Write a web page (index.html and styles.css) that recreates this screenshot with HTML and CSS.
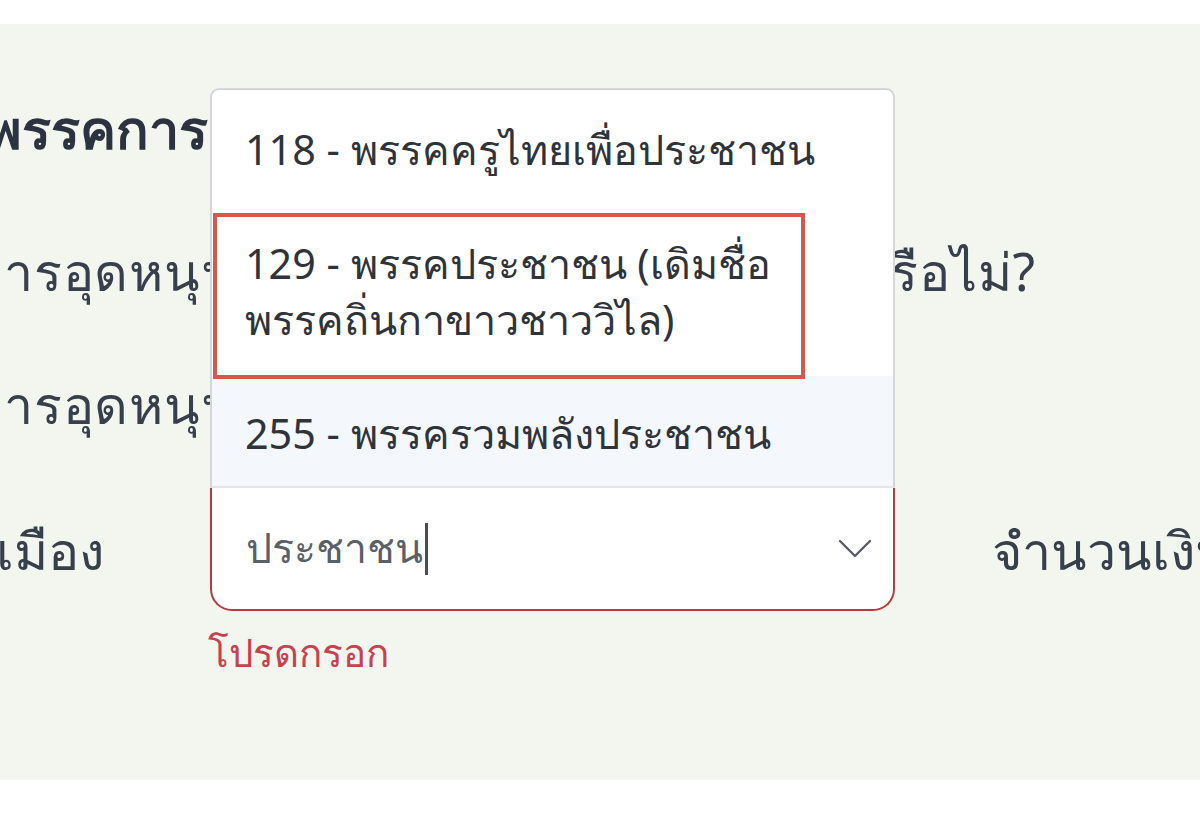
FILE: index.html
```html
<!DOCTYPE html>
<html lang="th">
<head>
  <meta charset="UTF-8" />
  <meta name="viewport" content="width=device-width, initial-scale=1" />
  <title>อุดหนุนพรรคการเมือง</title>
  <link rel="stylesheet" href="styles.css">
</head>
<body>
  <div class="panel">
    <div class="form">
      <h2 class="section-title">พรรคการเมือง</h2>

      <!-- choices -->
      <label class="choice">
        <span class="radio"></span>
        <span class="choice-text">การอุดหนุนให้พรรคการเมืองที่เลือกได้ หรือไม่?</span>
      </label>
      <label class="choice">
        <span class="radio"></span>
        <span class="choice-text">การอุดหนุนพรรคการเมือง</span>
      </label>

      <div class="field-row">
        <div class="field-label party-label">พรรคการเมือง</div>

        <div class="select-col">
          <div class="select-wrap">
            <ul class="dropdown">
              <li class="option">118 - พรรคครูไทยเพื่อประชาชน</li>
              <li class="option">129 - พรรคประชาชน (เดิมชื่อ<br>พรรคถิ่นกาขาวชาววิไล)</li>
              <li class="option option-hover">255 - พรรครวมพลังประชาชน</li>
              <div class="mark"></div>
            </ul>
            <div class="select">
              <span class="select-value">ประชาชน</span><span class="caret"></span>
              <svg class="chevron" width="34" height="20" viewBox="0 0 34 20">
                <polyline points="2,2 17,17 32,2" fill="none" stroke="#5a5d63" stroke-width="2.4" stroke-linecap="round" stroke-linejoin="round" />
              </svg>
            </div>
          </div>
          <div class="error">โปรดกรอก</div>
        </div>

        <div class="field-label amount">จำนวนเงินที่อุดหนุน</div>
      </div>
    </div>
  </div>
</body>
</html>
```

FILE: styles.css
```css
body {
  margin: 0;
  padding: 0;
  background: #fff;
  font-family: 'Noto Sans', 'DejaVu Sans', sans-serif;
  color: #373e4c;
  overflow: hidden;
}

.panel {
  margin-top: 24px;
  height: 756px;
  background: #f2f6ef;
  overflow: hidden;
}

.form {
  margin-left: -150px;
  padding-top: 73px;
}

.section-title {
  margin: 0 0 0 136px;
  font-size: 54px;
  line-height: 62px;
  font-weight: 700;
  color: #2c3340;
  white-space: nowrap;
}

.choice {
  display: flex;
  align-items: center;
  gap: 20px;
  margin-left: 74px;
  height: 133px;
  white-space: nowrap;
}

.choice:first-of-type {
  margin-top: 47px;
}

.radio {
  width: 24px;
  height: 24px;
  border: 2px solid #9aa0a8;
  border-radius: 50%;
  background: #fff;
  flex-shrink: 0;
}

.choice-text {
  font-size: 52px;
  letter-spacing: 0.85px;
}

.field-row {
  display: grid;
  grid-template-columns: 360px 685px 1fr;
  margin-top: 16px;
  white-space: nowrap;
}

.field-label {
  font-size: 52px;
  height: 123px;
  line-height: 123px;
}

.party-label {
  margin-left: -67px;
}

.amount {
  margin-left: 97px;
}

.select-col {
  position: relative;
}

.select-wrap {
  position: relative;
}

.dropdown {
  position: absolute;
  left: 0;
  right: 0;
  bottom: 100%;
  margin: 0;
  padding: 0;
  list-style: none;
  background: #fff;
  border: 2px solid #d4d6d9;
  border-bottom-color: #e3e5e9;
  border-radius: 9px 9px 0 0;
  z-index: 5;
}

.option {
  padding: 29px 33px;
  font-size: 41.3px;
  line-height: 56px;
  color: #2f343b;
}

.option:first-child {
  padding-top: 31px;
}

.option-hover {
  padding-bottom: 25px;
  background: #f4f7fb;
}

.mark {
  position: absolute;
  left: 1px;
  top: 123px;
  width: 592px;
  height: 166px;
  box-sizing: border-box;
  border: 4px solid #d8574a;
}

.select {
  display: flex;
  align-items: center;
  height: 123px;
  box-sizing: border-box;
  padding: 0 21px 0 34px;
  background: #fff;
  border: 2px solid #b83a3c;
  border-top: none;
  border-radius: 0 0 22px 22px;
}

.select-value {
  font-size: 41px;
  color: #5b5f66;
}

.caret {
  width: 3px;
  height: 52px;
  margin-left: 2px;
  background: #4a4d52;
}

.chevron {
  margin-left: auto;
}

.error {
  margin-top: 12px;
  margin-left: -2px;
  font-size: 38.5px;
  color: #c8414e;
}
```
